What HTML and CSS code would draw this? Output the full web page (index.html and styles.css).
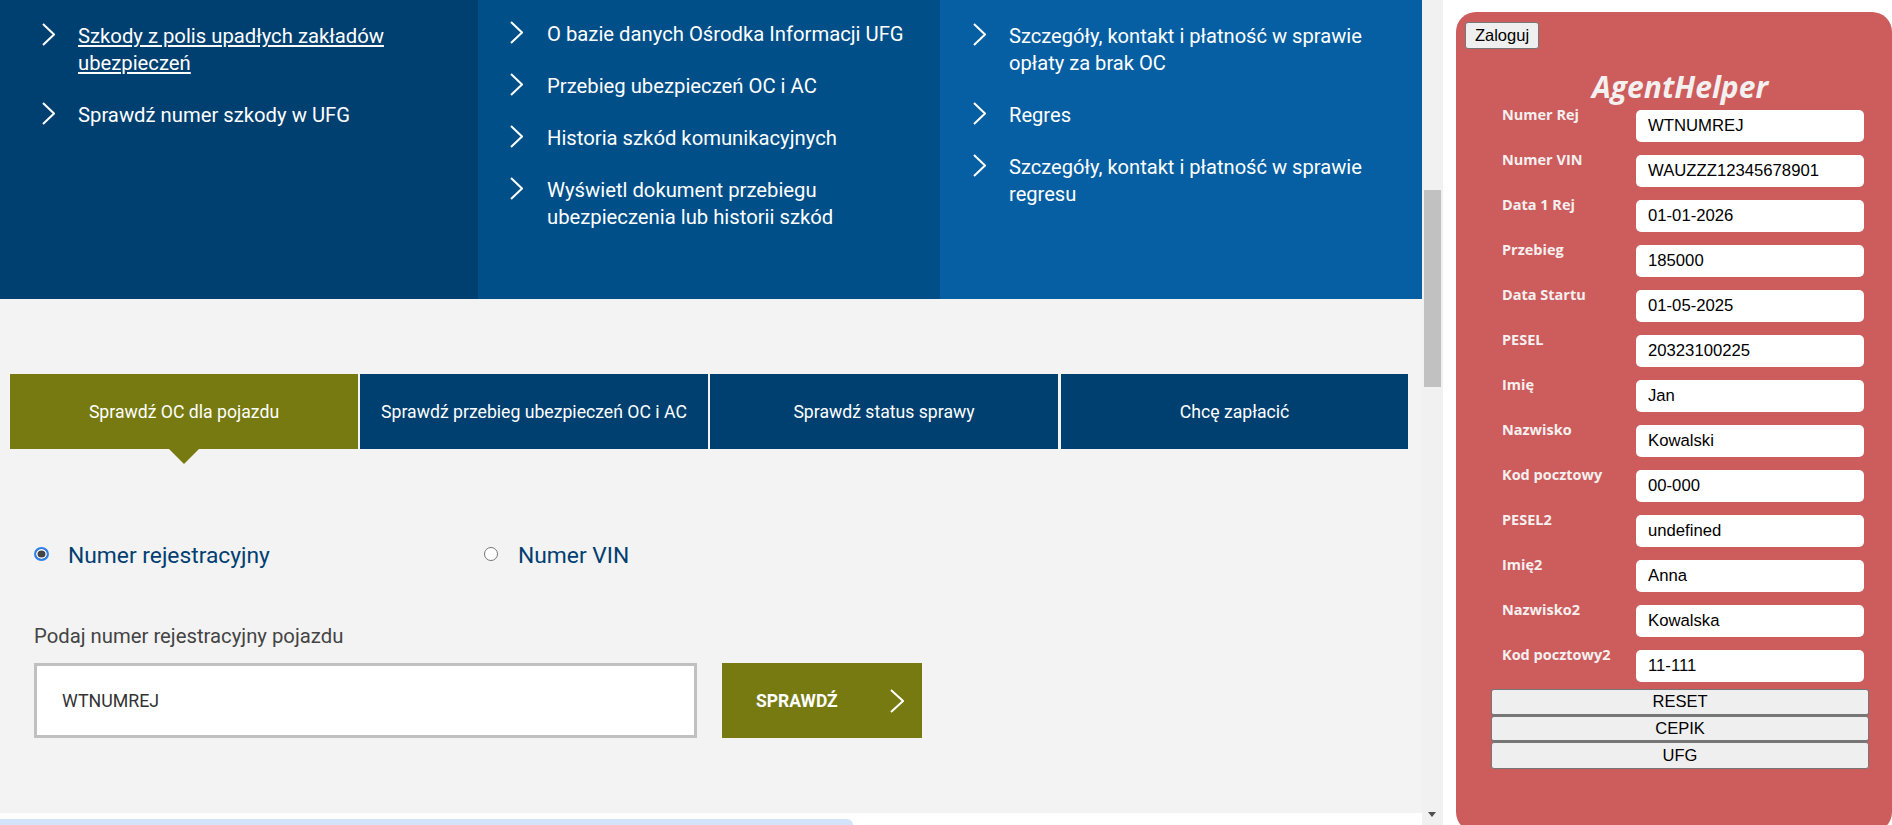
FILE: index.html
```html
<!DOCTYPE html>
<html lang="pl">
<head>
<meta charset="utf-8">
<title>AgentHelper</title>
<link rel="stylesheet" href="styles.css">
</head>
<body>
<div class="page">
  <div class="site">
    <main class="content">
      <section class="hero">
        <ul class="col col-a">
          <li><svg class="chev" viewBox="0 0 13 23"><path d="M1 1l11 10.5L1 22"/></svg><a class="link" href="#">Szkody z polis upadłych zakładów ubezpieczeń</a></li>
          <li><svg class="chev" viewBox="0 0 13 23"><path d="M1 1l11 10.5L1 22"/></svg><span>Sprawdź numer szkody w UFG</span></li>
        </ul>
        <ul class="col col-b">
          <li><svg class="chev" viewBox="0 0 13 23"><path d="M1 1l11 10.5L1 22"/></svg><span>O bazie danych Ośrodka Informacji UFG</span></li>
          <li><svg class="chev" viewBox="0 0 13 23"><path d="M1 1l11 10.5L1 22"/></svg><span>Przebieg ubezpieczeń OC i AC</span></li>
          <li><svg class="chev" viewBox="0 0 13 23"><path d="M1 1l11 10.5L1 22"/></svg><span>Historia szkód komunikacyjnych</span></li>
          <li><svg class="chev" viewBox="0 0 13 23"><path d="M1 1l11 10.5L1 22"/></svg><span>Wyświetl dokument przebiegu ubezpieczenia lub historii szkód</span></li>
        </ul>
        <ul class="col col-c">
          <li><svg class="chev" viewBox="0 0 13 23"><path d="M1 1l11 10.5L1 22"/></svg><span>Szczegóły, kontakt i płatność w sprawie opłaty za brak OC</span></li>
          <li><svg class="chev" viewBox="0 0 13 23"><path d="M1 1l11 10.5L1 22"/></svg><span>Regres</span></li>
          <li><svg class="chev" viewBox="0 0 13 23"><path d="M1 1l11 10.5L1 22"/></svg><span>Szczegóły, kontakt i płatność w sprawie regresu</span></li>
        </ul>
      </section>
      <section class="check">
        <nav class="tabs">
          <div class="tab active">Sprawdź OC dla pojazdu</div>
          <div class="tab">Sprawdź przebieg ubezpieczeń OC i AC</div>
          <div class="tab">Sprawdź status sprawy</div>
          <div class="tab">Chcę zapłacić</div>
        </nav>
        <div class="radios">
          <label class="radio radio-first"><span class="dot on"></span>Numer rejestracyjny</label>
          <label class="radio"><span class="dot"></span>Numer VIN</label>
        </div>
        <div class="prompt">Podaj numer rejestracyjny pojazdu</div>
        <div class="search">
          <div class="search-box">WTNUMREJ</div>
          <div class="search-btn"><span>SPRAWDŹ</span><svg class="chev-btn" viewBox="0 0 14 24"><path d="M1 1l12 11L1 23"/></svg></div>
        </div>
      </section>
      <div class="cookie"></div>
    </main>
    <div class="scrollbar">
      <div class="thumb"></div>
      <div class="arrow"></div>
    </div>
  </div>
  <aside class="panel">
    <button class="login">Zaloguj</button>
    <div class="panel-body">
      <h1 class="logo">AgentHelper</h1>
      <div class="fields">
        <label class="lbl">Numer Rej</label><div class="val">WTNUMREJ</div>
        <label class="lbl">Numer VIN</label><div class="val">WAUZZZ12345678901</div>
        <label class="lbl">Data 1 Rej</label><div class="val">01-01-2026</div>
        <label class="lbl">Przebieg</label><div class="val">185000</div>
        <label class="lbl">Data Startu</label><div class="val">01-05-2025</div>
        <label class="lbl">PESEL</label><div class="val">20323100225</div>
        <label class="lbl">Imię</label><div class="val">Jan</div>
        <label class="lbl">Nazwisko</label><div class="val">Kowalski</div>
        <label class="lbl">Kod pocztowy</label><div class="val">00-000</div>
        <label class="lbl">PESEL2</label><div class="val">undefined</div>
        <label class="lbl">Imię2</label><div class="val">Anna</div>
        <label class="lbl">Nazwisko2</label><div class="val">Kowalska</div>
        <label class="lbl">Kod pocztowy2</label><div class="val">11-111</div>
      </div>
      <div class="actions">
        <button class="act">RESET</button>
        <button class="act">CEPIK</button>
        <button class="act">UFG</button>
      </div>
    </div>
  </aside>
</div>
</body>
</html>
```
FILE: styles.css
```css
* { box-sizing: border-box; }
html, body { margin: 0; height: 825px; overflow: hidden; background: #fff; }
.page { display: flex; height: 825px; overflow: hidden; }

.site { display: flex; width: 1443px; flex: none; height: 825px; }
.content { width: 1422px; flex: none; height: 825px; overflow: hidden; background: #fff; font-family: Roboto, sans-serif; }

.hero { display: flex; height: 299px; color: #fff; font-size: 20.25px; line-height: 27px; }
.col { list-style: none; margin: 0; padding: 0; }
.col li { display: flex; margin-bottom: 25px; }
.col-a { width: 478px; background: #004071; padding: 23px 60px 0 42px; }
.col-b { width: 462px; background: #004f89; padding: 21px 20px 0 32px; }
.col-c { width: 482px; background: #065fa3; padding: 23px 40px 0 33px; font-size: 20.12px; }
.chev { width: 13px; height: 23px; flex: none; margin-right: 23px; fill: none; stroke: #fff; stroke-width: 2; }
.col-b .chev { margin-right: 24px; }
.link { color: #fff; text-decoration: underline; }

.check { height: 514px; background: #f3f3f3; padding: 75px 14px 0 10px; }
.tabs { display: grid; grid-template-columns: repeat(4, 1fr); gap: 2px; }
.tab { position: relative; height: 75px; display: flex; align-items: center; justify-content: center; background: #004071; color: #fff; font-size: 17.65px; }
.tab:last-child { margin-left: 1px; }
.tab.active { background: #767a10; }
.tab.active::after { content: ""; position: absolute; left: 159px; top: 75px; border-style: solid; border-width: 15px 15px 0; border-color: #767a10 transparent transparent; }

.radios { display: flex; margin: 92px 0 0 24px; color: #004071; font-size: 22.8px; line-height: 30px; }
.radio { display: flex; align-items: center; }
.radio-first { width: 450px; }
.dot { width: 14px; height: 14px; margin: 0 20px 5px 0; border-radius: 50%; border: 1px solid #767676; background: #fff; }
.dot.on { width: 15px; margin-right: 19px; border: 2px solid #2a80ee; box-shadow: inset 0 0 0 1.5px #fff; background: #444; }

.prompt { margin: 52px 0 0 24px; color: #444; font-size: 20.3px; line-height: 27px; }
.search { display: flex; margin: 13px 0 0 24px; }
.search-box { width: 663px; height: 75px; padding-left: 25px; display: flex; align-items: center; background: #fff; border: 3px solid #c0c0c0; color: #333; font-size: 17.8px; }
.search-btn { width: 200px; height: 75px; margin-left: 25px; padding: 0 18px 0 34px; display: flex; align-items: center; justify-content: space-between; background: #767a10; color: #fff; font-size: 17.5px; font-weight: 700; }
.chev-btn { width: 14px; height: 24px; fill: none; stroke: #fff; stroke-width: 2; }

.cookie { width: 853px; height: 20px; margin-top: 6px; background: #d3e3f9; border-top-right-radius: 6px; }

.scrollbar { position: relative; width: 21px; height: 825px; background: #f1f1f1; }
.thumb { position: absolute; left: 2px; top: 190px; width: 17px; height: 197px; background: #c1c1c1; }
.arrow { position: absolute; left: 6px; top: 812px; border-style: solid; border-width: 5px 4.5px 0; border-color: #505050 transparent transparent; }

.panel { width: 436px; height: 820px; flex: none; margin: 12px 0 0 13px; padding: 10px 23px 0 9px; background: #cd5c5c; border-radius: 20px; font-family: "Liberation Sans", Arial, sans-serif; }
.login { display: block; width: 74px; height: 27px; padding: 0; font: 16.5px "Liberation Sans", Arial, sans-serif; color: #000; background: #efefef; border: 1px solid #767676; border-radius: 3px; }
.panel-body { margin-left: 26px; }
.logo { margin: 19px 0 0; color: #f4f0f0; font: italic 700 30px/38px "Open Sans", sans-serif; text-align: center; }
.fields { display: grid; grid-template-columns: 134px 228px; row-gap: 13px; padding-left: 11px; margin-top: 4px; }
.lbl { margin-top: -5px; color: #f5f0f0; font: 700 14.5px/20px "Open Sans", sans-serif; }
.val { height: 32px; padding: 0 0 1px 12px; display: flex; align-items: center; background: #fff; border-radius: 5px; color: #000; font-size: 16.7px; }
.actions { margin-top: 7px; }
.act { display: block; width: 378px; height: 26.5px; padding: 0; font: 16.5px "Liberation Sans", Arial, sans-serif; color: #000; background: #efefef; border: 1px solid #767676; border-bottom-width: 2px; border-radius: 3px; }
.act:last-child { border-bottom-width: 1px; }
```
